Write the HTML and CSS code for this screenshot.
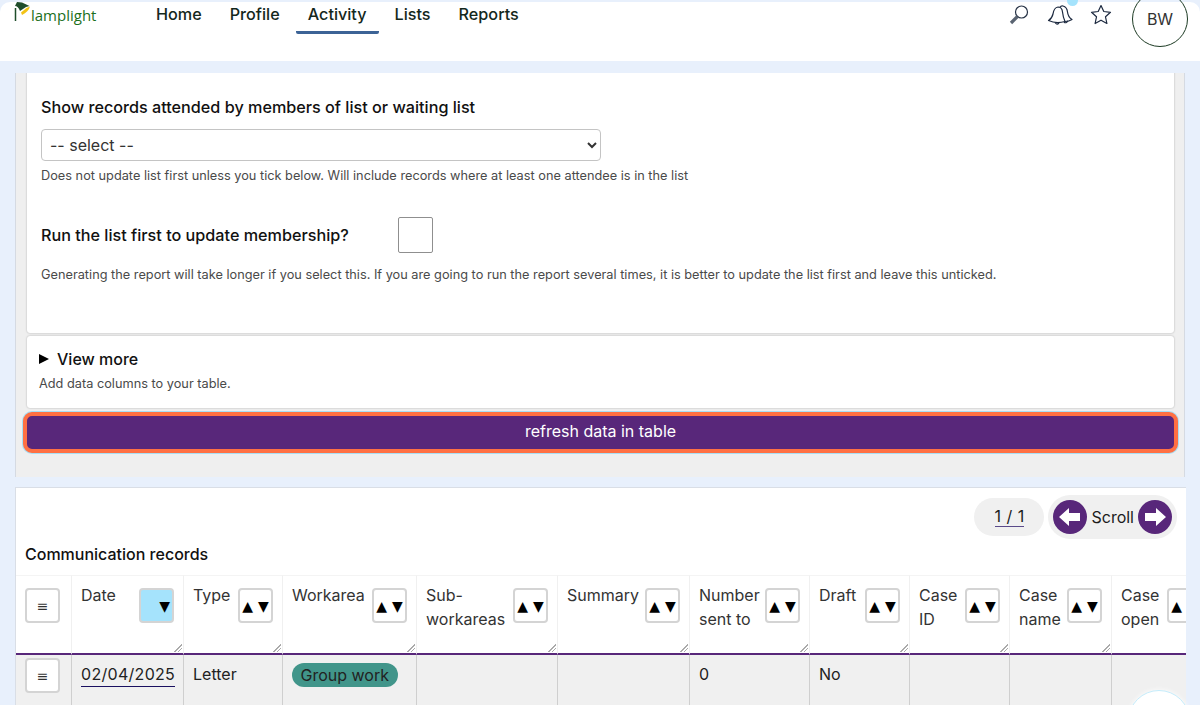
FILE: index.html
```html
<!DOCTYPE html>
<html>
<head>
    <title>Communication records</title>
    <link rel="stylesheet" href="styles.css">
</head>
<body>
    <header class="topbar">
        <a class="logo" href="#">
            <svg class="logo-lamp" width="18" height="24" viewBox="0 0 18 24">
                <path d="M1.500 8 L1.500 21" stroke="#1f4d2b" stroke-width="1.500" fill="none"/>
                <path d="M1 6 L3 2 L8 2.500 L15.500 6 L12 7 L6 11 Q4 6 1 6 Z" fill="#1f4d2b"/>
                <path d="M7 12.500 L12.500 8 L16 6.500 Q14.500 12 8 15 Z" fill="#f3c316"/>
            </svg>
            <span>lamplight</span>
        </a>
        <nav class="mainnav">
            <a href="#">Home</a>
            <a href="#">Profile</a>
            <a href="#" class="active">Activity</a>
            <a href="#">Lists</a>
            <a href="#">Reports</a>
        </nav>
        <div class="tools">
            <svg class="tool-search" width="22" height="22" viewBox="0 0 22 22" fill="none" stroke="#263245">
                <circle cx="13.500" cy="8" r="6" stroke-width="1.200"/>
                <path d="M9.500 12.500 L3 19" stroke-width="3.200" stroke="#5a6472"/>
            </svg>
            <span class="bell-wrap">
                <svg width="26" height="22" viewBox="0 0 26 22" fill="none" stroke="#1d2a40" stroke-width="1.200" stroke-linejoin="round">
                    <path d="M1.500 16.500 Q5 14.500 6 10 Q7 3.500 11 3 Q15 3 15.500 8 Q16 13 18 17.500 Q9 20 1.500 16.500 Z"/>
                    <path d="M13 3.500 Q14 1.500 16 2 Q20 3 20.500 8 Q21 13 25 15.500 Q22 17.500 18 17.500"/>
                    <path d="M8 18.500 Q10 21.500 12 18.800 M17 18 Q19 20 21 16.800"/>
                </svg>
                <span class="bell-dot"></span>
            </span>
            <svg width="22" height="22" viewBox="0 0 22 22" fill="none" stroke="#1d2a40" stroke-width="1.200" stroke-linejoin="round">
                <path d="M11 1.500 L13.800 7.500 L20.500 8.300 L15.500 12.800 L16.900 19.500 L11 16.200 L5.100 19.500 L6.500 12.800 L1.500 8.300 L8.200 7.500 Z"/>
            </svg>
            <div class="avatar">BW</div>
        </div>
    </header>

    <section class="filters">
        <div class="card card-main">
            <label class="field-label" for="listSelect">Show records attended by members of list or waiting list</label>
            <select id="listSelect" class="list-select">
                <option>-- select --</option>
            </select>
            <p class="hint hint-select">Does not update list first unless you tick below. Will include records where at least one attendee is in the list</p>
            <div class="tick-row">
                <label class="field-label tick-label" for="runFirst">Run the list first to update membership?</label>
                <input type="checkbox" id="runFirst" class="tick">
            </div>
            <p class="hint">Generating the report will take longer if you select this. If you are going to run the report several times, it is better to update the list first and leave this unticked.</p>
        </div>
        <div class="card card-more">
            <div class="more-title"><span class="more-arrow"></span>View more</div>
            <p class="hint">Add data columns to your table.</p>
        </div>
        <button type="button" class="refresh">refresh data in table</button>
    </section>

    <section class="results">
        <div class="results-top">
            <div class="pages"><span>1 / 1</span></div>
            <div class="scroller">
                <span class="round-btn">
                    <svg width="24" height="24" viewBox="0 0 24 24"><path d="M1 12 L11 3 V8 H22 V16 H11 V21 Z" fill="#fff"/></svg>
                </span>
                <span class="scroll-text">Scroll</span>
                <span class="round-btn">
                    <svg width="24" height="24" viewBox="0 0 24 24"><path d="M23 12 L13 3 V8 H2 V16 H13 V21 Z" fill="#fff"/></svg>
                </span>
            </div>
        </div>
        <h3 class="results-title">Communication records</h3>
        <div class="table-wrap">
            <table class="records">
                <colgroup>
                    <col class="c-menu"><col class="c-date"><col class="c-type"><col class="c-work"><col class="c-sub">
                    <col class="c-summary"><col class="c-number"><col class="c-draft"><col class="c-id"><col class="c-name"><col class="c-open">
                </colgroup>
                <thead>
                    <tr>
                        <th class="menu-cell"><span class="sort-btn menu-btn">&#8801;</span></th>
                        <th><div class="th-in"><span>Date</span><span class="sort-btn sort-on">&#9660;</span></div></th>
                        <th><div class="th-in"><span>Type</span><span class="sort-btn">&#9650;&#9660;</span></div></th>
                        <th><div class="th-in"><span>Workarea</span><span class="sort-btn">&#9650;&#9660;</span></div></th>
                        <th><div class="th-in"><span>Sub-<br>workareas</span><span class="sort-btn">&#9650;&#9660;</span></div></th>
                        <th><div class="th-in"><span>Summary</span><span class="sort-btn">&#9650;&#9660;</span></div></th>
                        <th><div class="th-in"><span>Number<br>sent to</span><span class="sort-btn">&#9650;&#9660;</span></div></th>
                        <th><div class="th-in"><span>Draft</span><span class="sort-btn">&#9650;&#9660;</span></div></th>
                        <th><div class="th-in"><span>Case<br>ID</span><span class="sort-btn">&#9650;&#9660;</span></div></th>
                        <th><div class="th-in"><span>Case<br>name</span><span class="sort-btn">&#9650;&#9660;</span></div></th>
                        <th><div class="th-in"><span>Case<br>open</span><span class="sort-btn">&#9650;&#9660;</span></div></th>
                    </tr>
                </thead>
                <tbody>
                    <tr>
                        <td class="menu-cell"><span class="sort-btn menu-btn">&#8801;</span></td>
                        <td><a href="#" class="date-link">02/04/2025</a></td>
                        <td>Letter</td>
                        <td><span class="pill">Group work</span></td>
                        <td></td>
                        <td></td>
                        <td>0</td>
                        <td>No</td>
                        <td></td>
                        <td></td>
                        <td></td>
                    </tr>
                </tbody>
            </table>
        </div>
    </section>

    <div class="help-bubble"></div>
</body>
</html>
```

FILE: styles.css
```css
html, body {
    height: 705px;
    overflow: hidden;
}
body {
    margin: 0;
    padding: 0;
    position: relative;
    font-family: Inter, "Open Sans", sans-serif;
    font-size: 16px;
    color: #1c1c1c;
    background-color: #e8f0fc;
}
a {
    color: inherit;
    text-decoration: none;
}

.topbar {
    height: 59px;
    margin-top: 2px;
    background-color: #fff;
    border-radius: 10px 10px 0 0;
    display: flex;
    align-items: flex-start;
    position: relative;
}
.logo {
    display: flex;
    align-items: flex-start;
    margin-left: 14px;
    width: 125px;
    color: #1c701c;
    font-family: "Open Sans", sans-serif;
    font-size: 15px;
    font-weight: 500;
}
.logo-lamp {
    margin-top: -2px;
    margin-right: -1px;
}
.logo span {
    margin-top: 3px;
}
.mainnav {
    display: flex;
    gap: 4px;
    margin-left: 5px;
}
.mainnav a {
    padding: 0 12px;
    height: 29px;
    line-height: 24px;
    font-size: 16.200px;
    font-weight: 500;
    color: #14281c;
}
.mainnav a.active {
    border-bottom: 3px solid #3c6396;
    border-radius: 0 0 2px 2px;
}
.tools {
    margin-left: auto;
    display: flex;
    align-items: flex-start;
    gap: 17px;
    padding-right: 12px;
    height: 59px;
}
.tools svg {
    margin-top: 2px;
}
.bell-wrap {
    position: relative;
}
.bell-dot {
    position: absolute;
    top: -2px;
    left: 20px;
    width: 11px;
    height: 6px;
    border-radius: 0 0 6px 6px;
    background-color: #a5e3fc;
}
.avatar {
    width: 54px;
    height: 54px;
    margin-top: -11px;
    margin-left: 3px;
    border: 1.500px solid #1d3b24;
    border-radius: 50%;
    display: flex;
    align-items: center;
    justify-content: center;
    font-size: 16px;
    color: #333;
}

.filters {
    margin: 12px 15px 0;
    width: 1170px;
    height: 404px;
    box-sizing: border-box;
    padding: 0 10px 0 11px;
    background-color: #efefef;
    border-left: 1px solid #d5dae2;
    border-right: 1px solid #d5dae2;
    overflow: hidden;
}
.card {
    background-color: #fff;
    border-radius: 0 0 3px 3px;
    box-shadow: 0 0 2px rgba(0, 0, 0, 0.3);
    box-sizing: border-box;
}
.card-main {
    height: 263px;
    margin-top: -3px;
    padding: 27px 14px 0;
}
.card-more {
    height: 72px;
    margin-top: 3px;
    padding: 12px 12px 0;
    border-radius: 3px;
}
.field-label {
    display: block;
    font-size: 16.200px;
    font-weight: 500;
    color: #111;
    line-height: 20px;
}
.list-select {
    display: block;
    width: 560px;
    height: 32px;
    margin-top: 12px;
    padding: 0 4px;
    font-family: inherit;
    font-size: 16px;
    color: #333;
    background-color: #fff;
    border: 1px solid #c4c4c4;
    border-radius: 4px;
}
.hint {
    margin: 0;
    font-size: 12.750px;
    line-height: 16px;
    color: #4a4a4a;
}
.hint-select {
    margin-top: 7px;
}
.tick-row {
    display: flex;
    align-items: center;
    margin-top: 33px;
    margin-bottom: 14px;
}
.tick-label {
    width: 357px;
}
.tick {
    appearance: none;
    width: 35px;
    height: 36px;
    margin: 0;
    background-color: #fff;
    border: 1px solid #8f8f8f;
    border-radius: 2px;
}
.more-title {
    display: flex;
    align-items: center;
    font-size: 16px;
    font-weight: 500;
    color: #111;
    line-height: 22px;
}
.more-arrow {
    width: 0;
    height: 0;
    margin-right: 8px;
    border-left: 10px solid #000;
    border-top: 5px solid transparent;
    border-bottom: 5px solid transparent;
}
.card-more .hint {
    margin-top: 6px;
}
.refresh {
    display: block;
    width: 1155px;
    height: 41px;
    margin: 4px 0 0 -4px;
    padding: 0 0 3px;
    font-family: inherit;
    font-size: 16px;
    color: #fff;
    background-color: #58277a;
    border: 4px solid #ff7043;
    border-radius: 9px;
    box-shadow: 0 0 0 1px #a9dff5;
    cursor: pointer;
}

.results {
    margin: 10px 15px 0;
    width: 1171px;
    background-color: #fff;
    border-top: 1px solid #d9dee6;
    border-left: 1px solid #d9dee6;
    box-sizing: border-box;
}
.results-top {
    display: flex;
    justify-content: flex-end;
    align-items: center;
    gap: 4px;
    height: 44px;
    padding: 7px 9px 0 0;
}
.pages {
    width: 70px;
    height: 38px;
    margin-top: -1px;
    border-radius: 19px;
    background-color: #f0f0f0;
    display: flex;
    align-items: center;
    justify-content: center;
    font-size: 16px;
    word-spacing: 1px;
}
.pages span {
    border-bottom: 1px solid #5a4a8a;
    line-height: 19px;
}
.scroller {
    display: flex;
    align-items: center;
    gap: 4px;
    height: 44px;
    padding: 0 5px;
    border-radius: 22px;
    background-color: #f0f0f0;
}
.round-btn {
    width: 34px;
    height: 34px;
    border-radius: 50%;
    background-color: #58277a;
    display: flex;
    align-items: center;
    justify-content: center;
}
.scroll-text {
    font-size: 16px;
}
.results-title {
    margin: 0;
    padding: 5px 9px 0;
    height: 36px;
    box-sizing: border-box;
    font-size: 16px;
    font-weight: 500;
    color: #111;
}
.table-wrap {
    overflow: hidden;
    height: 130px;
}
.records {
    table-layout: fixed;
    width: 1196px;
    border-collapse: separate;
    border-spacing: 0;
    font-size: 16px;
}
.c-menu { width: 56px; }
.c-date { width: 112px; }
.c-type { width: 99px; }
.c-work { width: 134px; }
.c-sub { width: 141px; }
.c-summary { width: 132px; }
.c-number { width: 120px; }
.c-draft { width: 100px; }
.c-id { width: 100px; }
.c-name { width: 102px; }
.c-open { width: 100px; }
.records th {
    height: 80px;
    box-sizing: border-box;
    padding: 0;
    vertical-align: top;
    text-align: left;
    font-weight: 400;
    color: #333;
    border-top: 1px solid #f4f4f4;
    border-right: 1px solid #f0f0f0;
    border-bottom: 2px solid #58277a;
    position: relative;
}
.records th:not(.menu-cell)::after {
    content: "";
    position: absolute;
    right: 1px;
    bottom: 1px;
    width: 8px;
    height: 8px;
    background: linear-gradient(135deg, transparent 50%, #aaa 50%, #aaa 58%, transparent 58%, transparent 72%, #aaa 72%, #aaa 80%, transparent 80%);
}
.th-in {
    display: flex;
    justify-content: space-between;
    padding: 7px 9px 0 9px;
    line-height: 24px;
}
.records td {
    height: 50px;
    padding: 7px 9px 0;
    box-sizing: border-box;
    vertical-align: top;
    color: #222;
    line-height: 24px;
    background-color: #f0f0f0;
    border-right: 1px solid #cfcfcf;
}
.records td.menu-cell {
    padding: 3px 0 0 9px;
}
.records th.menu-cell {
    padding: 12px 0 0 9px;
}
.sort-btn {
    flex: none;
    display: inline-flex;
    align-items: center;
    justify-content: center;
    box-sizing: border-box;
    width: 35px;
    height: 35px;
    margin-top: 5px;
    background-color: #fff;
    border: 2px solid #d4d4d4;
    border-radius: 4px;
    font-family: "DejaVu Sans", sans-serif;
    font-size: 14px;
    letter-spacing: 5px;
    padding-left: 5px;
    color: #000;
}
.menu-btn {
    margin-top: 0;
    padding-left: 0;
    letter-spacing: 0;
    color: #333;
}
.sort-on {
    justify-content: flex-end;
    padding-left: 0;
    padding-right: 2px;
    letter-spacing: 0;
    background-color: #a5e3fc;
}
.date-link {
    display: inline-block;
    letter-spacing: 0.3px;
    border-bottom: 1px solid #1a1060;
}
.pill {
    display: inline-block;
    margin-top: 1px;
    padding: 0 8.500px;
    line-height: 24px;
    border-radius: 12px;
    background-color: #41958a;
    white-space: nowrap;
}
.help-bubble {
    position: absolute;
    left: 1128px;
    top: 690px;
    width: 60px;
    height: 60px;
    border-radius: 50%;
    background-color: #fff;
    border: 1px solid #c5ecfb;
    box-shadow: 0 0 5px rgba(255, 255, 255, 0.9);
}
```
